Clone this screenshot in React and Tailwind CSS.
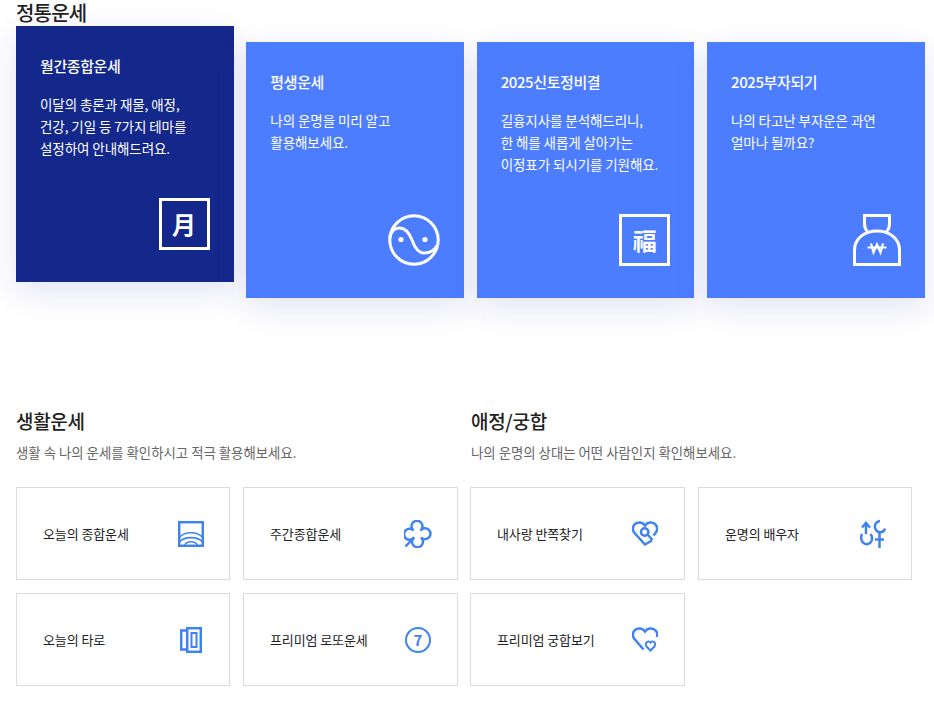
import React from 'react';

const CARDS = [
  { title: '월간종합운세', lines: ['이달의 총론과 재물, 애정,', '건강, 기일 등 7가지 테마를', '설정하여 안내해드려요.'], icon: 'month', active: true },
  { title: '평생운세', lines: ['나의 운명을 미리 알고', '활용해보세요.'], icon: 'yinyang' },
  { title: '2025신토정비결', lines: ['길흉지사를 분석해드리니,', '한 해를 새롭게 살아가는', '이정표가 되시기를 기원해요.'], icon: 'luck' },
  { title: '2025부자되기', lines: ['나의 타고난 부자운은 과연', '얼마나 될까요?'], icon: 'bag' },
];

const LIFE = [
  { label: '오늘의 종합운세', icon: 'sun' },
  { label: '주간종합운세', icon: 'clover' },
  { label: '오늘의 타로', icon: 'tarot' },
  { label: '프리미엄 로또운세', icon: 'seven' },
];

const LOVE = [
  { label: '내사랑 반쪽찾기', icon: 'heartSearch' },
  { label: '운명의 배우자', icon: 'gender' },
  { label: '프리미엄 궁합보기', icon: 'hearts' },
];

function CardIcon({ type }) {
  if (type === 'month' || type === 'luck') {
    return (
      <div className="w-[51px] h-[52px] border-[3px] border-white flex items-center justify-center text-white text-[24px] font-bold leading-none">
        {type === 'month' ? '月' : '福'}
      </div>
    );
  }
  if (type === 'yinyang') {
    return (
      <svg width="52" height="52" viewBox="0 0 52 52" fill="none" stroke="white" strokeWidth="3">
        <circle cx="26" cy="26" r="24.2" />
        <path d="M1.8 24C2.5 17 7 14 11 14C18 14 21 19 24 26C26.5 33 30 39 36 39C42 39 47 36 49.5 31" />
        <circle cx="13" cy="25.5" r="2.6" fill="white" stroke="none" />
        <circle cx="37" cy="25.5" r="2.6" fill="white" stroke="none" />
      </svg>
    );
  }
  return (
    <svg width="48" height="52" viewBox="0 0 48 52" fill="none" stroke="white" strokeWidth="3">
      <path d="M14.5 17.5C12.5 15.5 11.5 13 11.5 10V1.5H36.5V10C36.5 13 35.5 15.5 33.5 17.5" />
      <path d="M1.5 50.5V36C1.5 25 11 17 24 17C37 17 46.5 25 46.5 36V50.5Z" />
      <path d="M18 29.5L20.5 38.5L24 30.5L27.5 38.5L30 29.5" strokeWidth="2.2" />
      <path d="M14.5 33.5H33.5" strokeWidth="2" />
    </svg>
  );
}

function TileIcon({ type }) {
  const common = { fill: 'none', stroke: '#3f83f3', strokeWidth: 2.5 };
  switch (type) {
    case 'sun':
      return (
        <svg width="26" height="26" viewBox="0 0 26 26" {...common}>
          <rect x="1.2" y="1.2" width="23.6" height="23.6" />
          <path d="M1 17C6 10 20 10 25 17M1 21.5C6 15 20 15 25 21.5M6.5 24.5C9 19.5 17 19.5 19.5 24.5" strokeWidth="1.6" />
        </svg>
      );
    case 'clover':
      return (
        <svg width="28" height="28" viewBox="0 0 28 28" {...common}>
          <path d="M9.5 10.5A5.5 5.5 0 1 1 16.5 10.5A5.5 5.5 0 1 1 17 17.5A5.5 5.5 0 1 1 10 17.5A5.5 5.5 0 1 1 9.5 10.5Z" />
          <path d="M10 17.5L1.5 26.5" />
        </svg>
      );
    case 'tarot':
      return (
        <svg width="22" height="26" viewBox="0 0 22 26" {...common}>
          <rect x="7.2" y="1.2" width="13.6" height="23.6" />
          <rect x="11.5" y="6" width="5" height="14" strokeWidth="2" />
          <path d="M7 3.5H1.2V22.5H7" />
        </svg>
      );
    case 'seven':
      return (
        <div className="w-[26px] h-[26px] rounded-full border-[2.5px] border-[#3f83f3] flex items-center justify-center text-[#3f83f3] text-[15px] font-bold leading-none">
          7
        </div>
      );
    case 'heartSearch':
      return (
        <svg width="26" height="25" viewBox="0 0 26 25" {...common}>
          <path d="M20 19.5L13 23.5L2.5 12C0 9 0.5 5 3 3C6 0.5 10.5 1 13 4.5C15.5 1 20 0.5 23 3C25.5 5 26 9 23.5 12L21.5 14.5" />
          <circle cx="12.7" cy="11" r="3.7" />
          <path d="M15.5 13.5L20.5 19" />
        </svg>
      );
    case 'gender':
      return (
        <svg width="26" height="30" viewBox="0 0 26 30" {...common}>
          <path d="M6 15V4M2 8.5L6 4L10 8.5" />
          <path d="M2 15C0.5 18 1 22 3.5 24C6 26 10 25.5 11.5 22C12.5 19.5 12 17 10.5 15" />
          <path d="M20 2C15.5 2.5 14 7 15.5 10C17.5 14.5 23.5 14.5 25 9.5" />
          <path d="M19.5 14V29M15 20.5H24" />
        </svg>
      );
    default:
      return (
        <svg width="26" height="25" viewBox="0 0 26 25" {...common}>
          <path d="M11.5 22.5L2.5 12C0 9 0.5 5 3 3C6 0.5 10.5 1 13 4.5C15.5 1 20 0.5 23 3C25 4.5 25.7 7.5 25 10" />
          <path d="M18.5 23.5L14.5 19.5C13 17.5 14 15 16 14.5C17 14.2 18 14.8 18.5 15.5C19 14.8 20 14.2 21 14.5C23 15 24 17.5 22.5 19.5Z" strokeWidth="2" />
        </svg>
      );
  }
}

function Tile({ item }) {
  return (
    <div className="h-[93px] border border-[#dcdcdc] bg-white flex items-center pl-[26px]">
      <span className="w-[134px] text-[13px] text-[#222] tracking-[-0.1px]">{item.label}</span>
      <div className="w-[28px] flex justify-center">
        <TileIcon type={item.icon} />
      </div>
    </div>
  );
}

function Section({ title, desc, items, cols, headClass = '' }) {
  return (
    <section>
      <div className={headClass}>
        <h2 className="text-[19px] leading-[28px] font-medium text-[#222] tracking-[-0.3px]">{title}</h2>
        <p className="mt-[7px] text-[13.4px] leading-[20px] text-[#666]">{desc}</p>
      </div>
      <div className={`mt-[25px] grid ${cols} gap-[13px]`}>
        {items.map((item) => (
          <Tile key={item.label} item={item} />
        ))}
      </div>
    </section>
  );
}

export default function App() {
  return (
    <div className="w-[934px] h-[702px] overflow-hidden bg-white pl-4 font-['Noto_Sans_CJK_KR','Noto_Sans',sans-serif]">
      <h1 className="text-[20px] leading-[26px] font-medium text-[#222] tracking-[-0.8px]">정통운세</h1>

      <div className="w-[908.6px] grid grid-cols-4 gap-x-[12.73px] items-start">
        {CARDS.map((card) => (
          <div
            key={card.title}
            className={`h-[256px] px-[24px] pt-[28px] pb-[32px] flex flex-col text-white shadow-[0_10px_30px_rgba(40,40,180,0.13)] ${card.active ? 'bg-[#14288c]' : 'mt-4 bg-[#4c7dff]'}`}
          >
            <h3 className="text-[15px] leading-[24px] font-medium tracking-[-0.4px]">{card.title}</h3>
            <p className="mt-[15px] text-[13.5px] leading-[22px] tracking-[-0.08px]">
              {card.lines.map((line) => (
                <span key={line} className="block">{line}</span>
              ))}
            </p>
            <div className="mt-auto flex justify-end">
              <CardIcon type={card.icon} />
            </div>
          </div>
        ))}
      </div>

      <div className="mt-[109px] w-[896px] grid grid-cols-2 gap-x-[12px]">
        <Section title="생활운세" desc="생활 속 나의 운세를 확인하시고 적극 활용해보세요." items={LIFE} cols="grid-cols-[214px_215px]" />
        <Section title="애정/궁합" desc="나의 운명의 상대는 어떤 사람인지 확인해보세요." items={LOVE} cols="grid-cols-[215px_214px]" headClass="pl-px" />
      </div>
    </div>
  );
}
